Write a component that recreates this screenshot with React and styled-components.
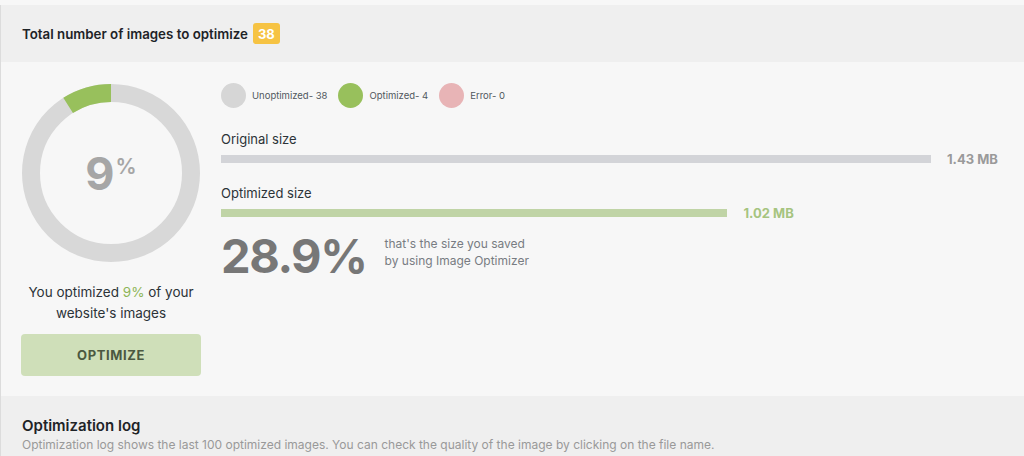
import React from "react";
import styled, { createGlobalStyle } from "styled-components";

const Global = createGlobalStyle`
  html, body { margin: 0; padding: 0; background: #f7f7f7; }
  body { font-family: Inter, "Noto Sans", "Liberation Sans", sans-serif; -webkit-font-smoothing: antialiased; }
`;

const Panel = styled.div`
  margin-top: 5px;
  border-left: 1px solid #dcdcdc;
  background: #f7f7f7;
`;

const Header = styled.div`
  height: 57px;
  background: #efefef;
  display: flex;
  align-items: center;
  gap: 5px;
  padding-left: 21px;
`;

const HeaderTitle = styled.span`
  font-size: 13.3px;
  font-weight: 600;
  color: #1e2327;
`;

const Badge = styled.span`
  display: inline-flex;
  align-items: center;
  justify-content: center;
  width: 27px;
  height: 21px;
  border-radius: 3px;
  background: #f6c343;
  color: #fff;
  font-size: 13px;
  font-weight: 700;
`;

const Body = styled.div`
  display: flex;
  gap: 20px;
  padding: 22px 24px 20px 20px;
`;

const LeftCol = styled.div`
  width: 180px;
  display: flex;
  flex-direction: column;
  align-items: center;
`;

const Donut = styled.div`
  position: relative;
  width: 178px;
  height: 178px;
`;

const DonutLabel = styled.div`
  position: absolute;
  inset: 0;
  display: flex;
  align-items: center;
  justify-content: center;
  color: #a6a6a6;
  font-weight: 700;
`;

const BigNum = styled.span`
  font-size: 45px;
  line-height: 1;
  letter-spacing: -1px;
`;

const Sup = styled.span`
  font-size: 21px;
  font-weight: 600;
  align-self: flex-start;
  margin-top: 70px;
  margin-left: 2px;
`;

const Summary = styled.p`
  margin: 20px 0 0;
  text-align: center;
  font-size: 13.5px;
  line-height: 21px;
  color: #2c3338;
`;

const Green = styled.span`
  color: #8db556;
`;

const OptimizeButton = styled.button`
  margin-top: 10px;
  width: 180px;
  height: 42px;
  border: none;
  border-radius: 4px;
  background: #cfdfb9;
  color: #4b5840;
  font-family: inherit;
  font-size: 13px;
  font-weight: 700;
  letter-spacing: 0.6px;
`;

const RightCol = styled.div`
  flex: 1;
  display: flex;
  flex-direction: column;
`;

const Legend = styled.div`
  display: flex;
  align-items: center;
  gap: 11px;
  height: 25px;
  margin-top: -1px;
`;

const LegendItem = styled.div`
  display: flex;
  align-items: center;
  gap: 6px;
  font-size: 9.5px;
  color: #50575e;
`;

const Dot = styled.span`
  width: 25px;
  height: 25px;
  border-radius: 50%;
  background: ${(p) => p.$color};
`;

const SizeLabel = styled.div`
  margin-top: ${(p) => p.$top}px;
  font-size: 13px;
  line-height: 18px;
  color: #2c3338;
`;

const BarRow = styled.div`
  margin-top: 6px;
  display: flex;
  align-items: center;
  gap: 16px;
  height: 10px;
`;

const Bar = styled.div`
  height: 8px;
  background: ${(p) => p.$color};
`;

const BarValue = styled.span`
  font-size: 13px;
  font-weight: 700;
  color: ${(p) => p.$color};
  white-space: nowrap;
`;

const Saved = styled.div`
  margin-top: 12px;
  display: flex;
  align-items: center;
  gap: 18px;
`;

const SavedPct = styled.span`
  font-size: 47px;
  font-weight: 700;
  color: #777;
  letter-spacing: -1.4px;
  line-height: 52px;
`;

const SavedText = styled.p`
  margin: 0 0 8px;
  font-size: 12px;
  line-height: 17px;
  color: #787c82;
`;

const LogSection = styled.div`
  background: #efefef;
  padding: 20px 22px 20px 21px;
`;

const LogTitle = styled.h2`
  margin: 0;
  font-size: 15px;
  font-weight: 600;
  color: #1e2327;
  line-height: 20px;
`;

const LogDesc = styled.p`
  margin: 0;
  font-size: 12px;
  line-height: 18px;
  color: #999;
`;

function Ring({ pct }) {
  const cx = 89, cy = 89, r = 80;
  const a = (pct / 100) * 2 * Math.PI;
  const x = cx - r * Math.sin(a);
  const y = cy - r * Math.cos(a);
  return (
    <svg width="178" height="178" viewBox="0 0 178 178">
      <circle cx={cx} cy={cy} r={r} fill="none" stroke="#d8d8d8" strokeWidth="18" />
      <path d={`M ${cx} ${cy - r} A ${r} ${r} 0 0 0 ${x} ${y}`} fill="none" stroke="#98c05c" strokeWidth="18" />
    </svg>
  );
}

export default function App() {
  return (
    <>
      <Global />
      <Panel>
        <Header>
          <HeaderTitle>Total number of images to optimize</HeaderTitle>
          <Badge>38</Badge>
        </Header>
        <Body>
          <LeftCol>
            <Donut>
              <Ring pct={9} />
              <DonutLabel>
                <BigNum>9</BigNum>
                <Sup>%</Sup>
              </DonutLabel>
            </Donut>
            <Summary>
              You optimized <Green>9%</Green> of your
              <br />
              website's images
            </Summary>
            <OptimizeButton>OPTIMIZE</OptimizeButton>
          </LeftCol>
          <RightCol>
            <Legend>
              <LegendItem><Dot $color="#d6d6d6" />Unoptimized- 38</LegendItem>
              <LegendItem><Dot $color="#98c05c" />Optimized- 4</LegendItem>
              <LegendItem><Dot $color="#e8b4b6" />Error- 0</LegendItem>
            </Legend>
            <SizeLabel $top={22}>Original size</SizeLabel>
            <BarRow>
              <Bar $color="#d3d4d8" style={{ width: "calc(100% - 69px)" }} />
              <BarValue $color="#9a9a9a">1.43 MB</BarValue>
            </BarRow>
            <SizeLabel $top={20}>Optimized size</SizeLabel>
            <BarRow>
              <Bar $color="#c0d4a6" style={{ width: `calc((100% - 69px) * ${1.02 / 1.43})` }} />
              <BarValue $color="#a6c47f">1.02 MB</BarValue>
            </BarRow>
            <Saved>
              <SavedPct>28.9%</SavedPct>
              <SavedText>
                that's the size you saved
                <br />
                by using Image Optimizer
              </SavedText>
            </Saved>
          </RightCol>
        </Body>
        <LogSection>
          <LogTitle>Optimization log</LogTitle>
          <LogDesc>
            Optimization log shows the last 100 optimized images. You can check the quality of the image by clicking on the file name.
          </LogDesc>
        </LogSection>
      </Panel>
    </>
  );
}
